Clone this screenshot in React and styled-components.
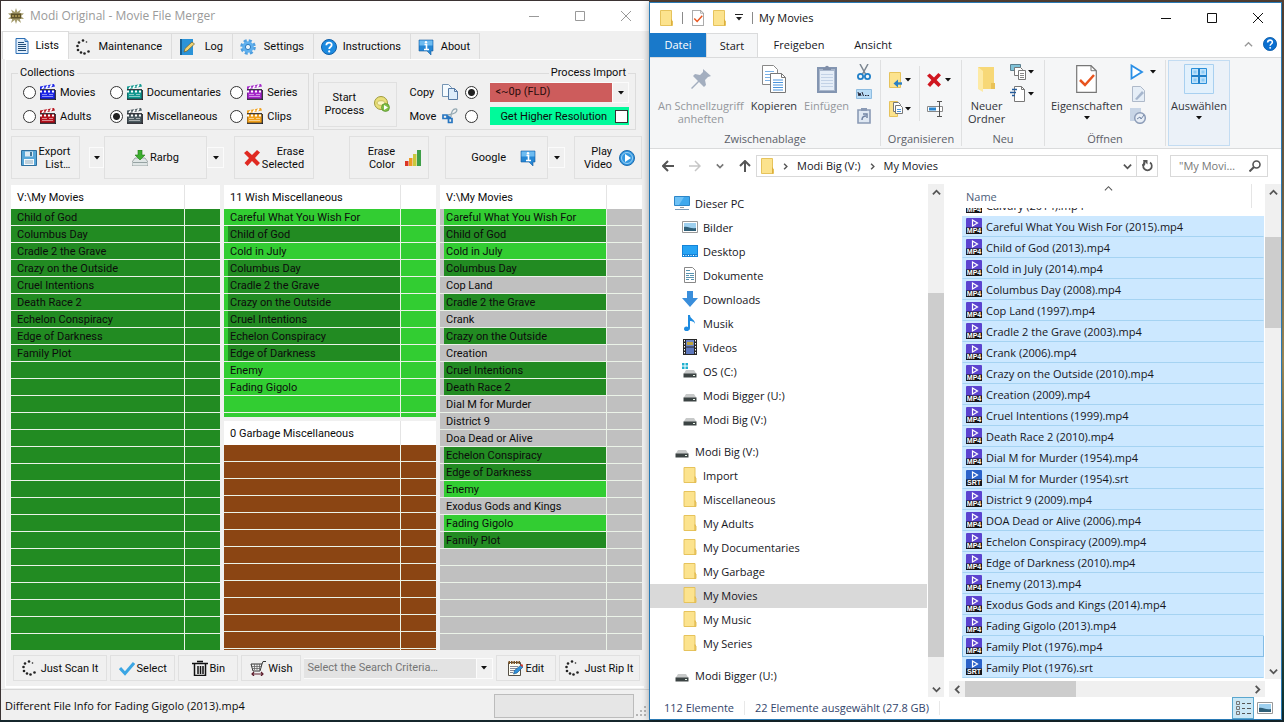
import React from "react";
import styled, { createGlobalStyle, css } from "styled-components";

const classic = 'Roboto, "Liberation Sans", Arial, sans-serif';
const modern = '"Open Sans", "Noto Sans", sans-serif';
const tracks = (...n) => n.map((v) => `minmax(0, ${v}fr)`).join(" ");

const Global = createGlobalStyle`
  * { box-sizing: border-box; }
  body { margin: 0; background: #4f3f35; }
  button, input, select { font: inherit; color: inherit; margin: 0; }
  button { border: 0; padding: 0; background: none; }
  a { color: inherit; text-decoration: none; }
  svg { display: block; flex: none; }
`;

const Desktop = styled.div`
  min-height: 100vh;
  padding: 0 2px 1px 0;
  display: grid;
  grid-template-columns: ${tracks(649, 633)};
  background: linear-gradient(#5a4537, #7b6a4c 25%, #b09a62 50%, #6b5a2e 75%, #0d3b3b 98%, #16252b);
`;

/* ---------- Movie File Merger window ---------- */
const Merger = styled.section`
  display: flex;
  flex-direction: column;
  margin-bottom: 1px;
  border-top: 1px solid #3b3333;
  border-left: 1px solid #3b3333;
  background: #f0f0f0;
  color: #0c0c0c;
  font: 11px/13px ${classic};
`;
const TitleBar = styled.header`
  display: flex;
  align-items: center;
  height: 30px;
  padding-left: ${(p) => p.$pad}px;
  background: #fff;
  color: ${(p) => p.$ink};
  font: ${(p) => p.$size}px/16px ${modern};
`;
const QuickAccess = styled.div`
  display: flex;
  align-items: center;
  gap: 9px;
`;
const TitleText = styled.h1`
  flex: 1;
  margin: 0 0 0 6px;
  font: inherit;
`;
const Control = styled.button`
  display: flex;
  align-items: center;
  justify-content: center;
  width: 46px;
  height: 28px;
`;
const TabStrip = styled.nav`
  display: flex;
  align-items: flex-end;
  height: 28px;
  padding-left: 1px;
`;
const Tab = styled.button`
  display: flex;
  align-items: center;
  justify-content: space-between;
  width: ${(p) => p.$w}px;
  height: ${(p) => (p.$on ? 28 : 26)}px;
  padding: 0 9px 0 ${(p) => (p.$on ? 11 : 7)}px;
  border: 1px solid #dcdcdc;
  border-bottom: 0;
  border-left-width: ${(p) => (p.$on ? 1 : 0)}px;
  background: ${(p) => (p.$on ? "#fff" : "#f0f0f0")};
`;
const Panel = styled.main`
  flex: 1;
  display: flex;
  flex-direction: column;
  margin: 0 5px 0 4px;
  padding: 6px 2px 5px 5px;
  border-top: 1px solid #fff;
  border-left: 1px solid #fff;
  border-bottom: 2px solid #fff;
`;
const GroupRow = styled.div`
  display: grid;
  grid-template-columns: ${tracks(298, 323)};
  gap: 4px;
  padding-right: 6px;
`;
const Group = styled.fieldset`
  min-width: 0;
  height: 64px;
  margin: 0;
  padding: 0;
  border: 1px solid #dcdcdc;
`;
const Legend = styled.legend`
  height: 14px;
  margin-left: ${(p) => (p.$end ? "auto" : "6px")};
  margin-right: ${(p) => (p.$end ? "7px" : "auto")};
  padding: 0 2px;
  line-height: 14px;
`;
const RadioGrid = styled.div`
  display: grid;
  grid-template-columns: ${tracks(87, 121, 78)};
  grid-auto-rows: 24px;
  padding-left: 11px;
`;
const Choice = styled.label`
  display: flex;
  align-items: center;
  gap: 4px;
  white-space: nowrap;
`;
const Radio = styled.input.attrs({ type: "radio" })`
  appearance: none;
  flex: none;
  width: 13px;
  height: 13px;
  border: 1px solid #333;
  border-radius: 50%;
  background: #fff;
  &:checked { background: radial-gradient(circle, #222 0 3px, #fff 4px); }
`;
const ProcessGrid = styled.div`
  display: grid;
  grid-template-columns: ${tracks(79, 70, 139)};
  grid-template-rows: 24px 24px;
  column-gap: 12px;
  align-items: center;
  padding: 0 6px 0 4px;
`;
const FlatButton = styled.button`
  display: flex;
  align-items: center;
  justify-content: ${(p) => p.$justify || "center"};
  gap: ${(p) => p.$gap || 2}px;
  min-width: 0;
  height: ${(p) => p.$h || 43}px;
  padding: 0 ${(p) => p.$pad || 0}px;
  grid-row: ${(p) => p.$span || "auto"};
  grid-column: ${(p) => p.$col || "auto"};
  border: 1px solid #e0e0e0;
  background: #f0f0f0;
  text-align: ${(p) => p.$align || "center"};
  white-space: pre;
`;
const CaretButton = styled.button`
  display: flex;
  align-items: center;
  justify-content: center;
  align-self: center;
  grid-column: ${(p) => p.$col || "auto"};
  width: 100%;
  height: 21px;
  border: 1px solid #fbfbfb;
  background: #f0f0f0;
`;
const Transfer = styled.label`
  display: grid;
  grid-template-columns: 26px 16px 13px;
  justify-content: end;
  align-items: center;
  gap: 7px;
`;
const Combo = styled.div`
  display: grid;
  grid-template-columns: minmax(0, 1fr) 17px;
  align-items: center;
  height: ${(p) => p.$h}px;
  background: #fafafa;
`;
const Select = styled.select`
  appearance: none;
  width: 100%;
  height: 19px;
  padding: 0 0 2px ${(p) => p.$pad}px;
  border: 0;
  border-radius: 0;
  background: ${(p) => p.$bg};
  color: ${(p) => p.$ink};
`;
const Resolution = styled.label`
  display: flex;
  align-items: center;
  justify-content: flex-end;
  gap: 8px;
  height: 18px;
  padding-right: 1px;
  background: #00fa9a;
`;
const Tick = styled.input.attrs({ type: "checkbox" })`
  appearance: none;
  width: 13px;
  height: 13px;
  border: 1px solid #333;
  background: #fff;
`;
const Toolbar = styled.div`
  display: grid;
  grid-template-columns: ${tracks(69, 9, 15, 103, 17, 10, 80, 35, 80, 16, 103, 17, 9, 68)};
  margin: 6px 0;
`;
const Lists = styled.div`
  display: grid;
  grid-template-columns: ${tracks(209, 212, 202)};
  gap: 4px;
`;
const Stack = styled.div`
  display: flex;
  flex-direction: column;
  gap: 4px;
`;
const Clip = styled.div`
  height: ${(p) => p.$h}px;
  overflow: hidden;
`;
const MovieTable = styled.table`
  width: 100%;
  table-layout: fixed;
  border-collapse: separate;
  border-spacing: 0;
  background: ${(p) => p.$bg};
  th {
    height: 24px;
    padding: 0 0 0 6px;
    background: #fff;
    font-weight: normal;
    text-align: left;
  }
  th:last-child { width: 35px; }
  th:first-child { border-right: 1px solid #e4e4e4; }
  td {
    height: 17px;
    padding: 0 0 0 4px;
    border-bottom: 1px solid #ebf3e8;
  }
  td:first-child { border-right: 1px solid #ebf3e8; }
`;
const MovieName = styled.div`
  height: 16px;
  padding-left: 2px;
  background: ${(p) => p.$bg};
  line-height: 18px;
  white-space: nowrap;
`;
const ActionBar = styled.div`
  display: grid;
  grid-template-columns: ${tracks(94, 65, 60, 60, 188, 60, 81)};
  gap: 3px;
  align-items: center;
  margin-top: 5px;
  padding: 0 2px;
`;
const MergerStatus = styled.footer`
  display: flex;
  align-items: center;
  height: 31px;
  margin-top: 1px;
  padding: 1px 2px 0 4px;
  border-top: 1px solid #d7d7d7;
  font: 11px/16px ${modern};
`;
const StatusText = styled.span`flex: 1;`;
const Progress = styled.div`
  width: 140px;
  height: 24px;
  margin-right: 2px;
  border: 1px solid #bcbcbc;
  background: #e6e6e6;
`;
const Grip = styled.span`align-self: flex-end; padding-bottom: 3px;`;

/* ---------- Explorer window ---------- */
const Explorer = styled.section`
  position: relative;
  display: flex;
  flex-direction: column;
  margin: 2px 0 1px;
  border: 1px solid #2a7ab5;
  background: #fff;
  color: #16161c;
  box-shadow: 0 0 7px rgba(0, 0, 0, 0.35);
  font: 11px/13px ${modern};
`;
const Rule = styled.span`
  width: 1px;
  height: 12px;
  background: #8a8a8a;
`;
const RibbonTabs = styled.nav`
  display: flex;
  height: 24px;
`;
const RibbonTab = styled.button`
  width: ${(p) => p.$w}px;
  padding-bottom: 2px;
  border: 1px solid transparent;
  border-bottom: 0;
  ${(p) => p.$kind === "file" && css`background: #1979ca; color: #fff;`}
  ${(p) => p.$kind === "on" && css`background: #f5f6f7; border-color: #dadbdc; height: 25px;`}
`;
const TabEnd = styled.div`
  display: flex;
  flex: 1;
  align-items: center;
  justify-content: flex-end;
  gap: 10px;
  padding: 0 4px 2px 0;
`;
const Ribbon = styled.div`
  display: flex;
  height: 92px;
  padding: 2px 0;
  border-top: 1px solid #dadbdc;
  border-bottom: 1px solid #dadbdc;
  background: #f5f6f7;
`;
const RibbonGroup = styled.div`
  display: flex;
  flex-direction: column;
  width: ${(p) => p.$w}px;
  border-right: 1px solid #dfe0e1;
`;
const RibbonBody = styled.div`
  display: flex;
  flex: 1;
  gap: ${(p) => p.$gap || 5}px;
  padding: 4px 0 0 ${(p) => p.$pad || 8}px;
`;
const RibbonLabel = styled.div`
  height: 16px;
  color: #5c6068;
  line-height: 17px;
  text-align: center;
`;
const Big = styled.button`
  display: flex;
  flex-direction: column;
  align-items: center;
  align-self: flex-start;
  gap: 5px;
  color: ${(p) => (p.$dim ? "#94979c" : "#33353a")};
  white-space: pre;
`;
const IconWell = styled.span`
  display: flex;
  align-items: center;
  justify-content: center;
  height: 30px;
`;
const Label = styled.span`
  display: flex;
  flex-direction: column;
  align-items: center;
  gap: 4px;
`;
const Column = styled.div`
  display: flex;
  flex-direction: column;
  gap: ${(p) => p.$gap || 6}px;
  padding-top: ${(p) => p.$top || 0}px;
`;
const Small = styled.button`
  display: flex;
  align-items: center;
  gap: ${(p) => p.$gap || 2}px;
  height: 16px;
`;
const Divider = styled.span`
  width: 1px;
  height: 55px;
  margin: 2px 2px 0 3px;
  background: #dfe0e1;
`;
const Chosen = styled.div`
  display: flex;
  justify-content: center;
  width: 62px;
  margin-left: 2px;
  padding-top: 3px;
  border: 1px solid #c3dcf2;
  background: #ebf1f8;
`;
const AddressRow = styled.div`
  display: flex;
  height: 35px;
  padding: 6px 13px 7px 12px;
`;
const Nav = styled.div`
  display: flex;
  align-items: center;
  width: 94px;
  gap: ${(p) => p.$gap}px;
`;
const Address = styled.div`
  display: flex;
  flex: 1;
  align-items: center;
  gap: 8px;
  padding-left: 4px;
  border: 1px solid #d9d9d9;
`;
const Crumb = styled.a`
  padding-bottom: 2px;
`;
const Push = styled.span`flex: 1;`;
const Refresh = styled.button`
  display: flex;
  align-items: center;
  justify-content: center;
  align-self: stretch;
  width: 21px;
  margin-left: -4px;
  border-left: 1px solid #d9d9d9;
`;
const Search = styled.label`
  display: flex;
  align-items: center;
  width: 98px;
  margin-left: 12px;
  padding: 0 6px 0 8px;
  border: 1px solid #d9d9d9;
`;
const SearchInput = styled.input`
  flex: 1;
  min-width: 0;
  padding: 0 0 1px;
  border: 0;
  outline: 0;
  background: none;
  &::placeholder { color: #777; opacity: 1; }
`;
const Body = styled.div`
  display: flex;
  flex: 1;
`;
const Tree = styled.ul`
  flex: 1;
  min-width: 0;
  margin: 0 1px 0 0;
  padding: 8px 0 0;
  list-style: none;
`;
const TreeLink = styled.a`
  display: flex;
  align-items: center;
  gap: 5px;
  height: 24px;
  margin-top: ${(p) => (p.$section ? 8 : 0)}px;
  padding: 0 0 2px ${(p) => (p.$deep ? 32 : 24)}px;
  background: ${(p) => (p.$on ? "#d9d9d9" : "none")};
`;
const VBar = styled.div`
  display: flex;
  flex-direction: column;
  width: 16px;
  background: #f0f0f0;
`;
const HBar = styled.div`
  display: flex;
  width: 100%;
  height: 16px;
  background: #f0f0f0;
`;
const Arrow = styled.button`
  display: flex;
  align-items: center;
  justify-content: center;
  width: 16px;
  height: 16px;
`;
const Space = styled.div`flex: ${(p) => p.$n} 0 0;`;
const Thumb = styled(Space)`background: #cdcdcd;`;
const FilesPane = styled.div`
  display: grid;
  grid-template-columns: minmax(0, 1fr) 16px;
  grid-template-rows: 1fr 16px;
  width: 332px;
  margin-left: 5px;
  row-gap: 2px;
`;
const FileTable = styled.table`
  align-self: start;
  width: 100%;
  border-spacing: 0;
  th, td { padding: 0 0 0 13px; text-align: left; font-weight: normal; }
  th { height: 24px; color: #4c607a; }
`;
const NameHead = styled.div`
  display: grid;
  grid-template-columns: 1fr 10px 1fr;
  height: 24px;
  margin-right: 13px;
  padding-left: 4px;
  border-right: 1px solid #e5e5e5;
  line-height: 26px;
`;
const FileClip = styled.div`
  display: flex;
  align-items: flex-end;
  height: 8px;
  overflow: hidden;
`;
const FileRow = styled.div`
  display: flex;
  align-items: center;
  gap: 4px;
  flex: none;
  height: 21px;
  margin-right: 1px;
  padding-left: 3px;
  border: 1px solid transparent;
  border-top: 0;
  white-space: nowrap;
  ${(p) => p.$picked && css`background: #cce8ff; border-color: #cce8ff; border-bottom-color: #a5d3f2;`}
  ${(p) => p.$focus && css`border-color: #84bde6;`}
`;
const ExplorerStatus = styled.footer`
  display: flex;
  align-items: center;
  height: 22px;
  padding: 0 5px 0 14px;
  color: #33456b;
`;
const StatusPart = styled.span`
  padding: 0 10px 1px;
  border-right: 1px solid #e8e8e8;
  &:first-child { padding-left: 0; }
`;
const ViewButton = styled.button`
  display: flex;
  align-items: center;
  justify-content: center;
  width: 22px;
  height: 22px;
  ${(p) => p.$on && css`background: #cbe8f6; border: 1px solid #5aa7cf;`}
`;

/* ---------- drawings ---------- */
const Svg = ({ w = 16, h = 16, box, children }) => (
  <svg width={w} height={h} viewBox={box || `0 0 ${w} ${h}`} fill="none" aria-hidden="true">{children}</svg>
);
const Caret = ({ color = "#111" }) => <Svg w={6} h={4}><path d="M0 0h6L3 3.5z" fill={color} /></Svg>;
const MinIcon = ({ c }) => <Svg w={10} h={10}><path d="M0 5.5h10" stroke={c} /></Svg>;
const MaxIcon = ({ c }) => <Svg w={10} h={10}><path d="M.5.5h9v9h-9z" stroke={c} /></Svg>;
const CloseIcon = ({ c }) => <Svg w={10} h={10}><path d="M0 0l10 10M10 0L0 10" stroke={c} /></Svg>;
const Chevron = ({ dir = "up", c = "#555", w = 9, s = 2 }) => (
  <Svg w={w} h={w} box="0 0 10 10">
    <path d={{ up: "M1 7l4-4 4 4", down: "M1 3l4 4 4-4", left: "M7 1L3 5l4 4", right: "M3 1l4 4-4 4" }[dir]} stroke={c} strokeWidth={s} />
  </Svg>
);
const BurstIcon = () => (
  <Svg><path d="M8 0l1.3 4L13 1.5 11.5 5 16 5.5 13 8l3 3-4.3-.2L13 15l-3.7-3L8 16l-1.3-4L3 15l1.3-4.2L0 11l3-3-3-2.5L4.5 5 3 1.5 6.7 4z" fill="#a49b6c" /><path d="M3 5.5h10v5H3z" fill="#5c5129" /><path d="M4 8h8" stroke="#ddc66c" strokeDasharray="2 1" /></Svg>
);
const PageIcon = () => (
  <Svg><path d="M2 .5h9l3 3v12H2z" fill="#e3effc" stroke="#2d6fb4" /><path d="M11 .5v3h3" stroke="#2d6fb4" /><path d="M4 4.5h6M4 6.5h8M4 8.5h8M4 10.5h8M4 12.5h8" stroke="#23507c" /></Svg>
);
const DotsIcon = () => (
  <Svg w={14} h={16}>{[[7, 1.5], [3, 3.5], [1.5, 7], [2, 11], [5, 13.5], [8.5, 14.5], [12.5, 12.5], [10.5, 3]].map(([x, y], i) => <circle key={i} cx={x} cy={y} r={i === 7 ? 0.8 : 1.3} fill="#222" />)}</Svg>
);
const LogIcon = () => (
  <Svg><path d="M1 0h13v16H1z" fill="#2b93d8" /><path d="M1 0h2v16H1z" fill="#176095" /><path d="M5 13l1-3.5L13 3l2.5 2L8 12z" fill="#f1d271" stroke="#6f602c" strokeWidth=".7" /></Svg>
);
const GearIcon = () => (
  <Svg><circle cx="8" cy="8" r="6.3" stroke="#4f9ede" strokeWidth="3" strokeDasharray="2.9 2.05" /><circle cx="8" cy="8" r="5.8" fill="#5fb0ee" /><circle cx="8" cy="8" r="2.6" fill="#e9f5fd" stroke="#2d7abd" /></Svg>
);
const HelpIcon = ({ size = 16, c = "#1d8be0" }) => (
  <Svg w={size} h={size} box="0 0 16 16"><circle cx="8" cy="8" r="7.5" fill={c} stroke="#0f5ea8" /><path d="M5.3 6.2c.2-3.6 5.5-3.3 5.4-.3C10.6 8 8.2 8 8.2 10" stroke="#fff" strokeWidth="1.8" /><circle cx="8.2" cy="12.4" r="1.1" fill="#fff" /></Svg>
);
const InfoIcon = () => (
  <Svg><path d="M1 1h14v11h-2v4l-4-4H1z" fill="#2687d4" stroke="#165c9d" strokeWidth=".6" /><path d="M1.5 1.5h13v5h-13z" fill="#6dbbf0" /><path d="M6.5 5.5h2v5M6 10.5h5" stroke="#fff" strokeWidth="1.6" /><circle cx="8" cy="3.2" r="1.2" fill="#fff" /></Svg>
);
const Clapper = ({ c }) => (
  <Svg>
    <path d="M0 6h15v9H0z" fill={c} stroke="#101018" strokeOpacity=".55" />
    <path d="M0 5.500V2.500L14 0l1 2.500z" fill={c} />
    <path d="M2 5l2-2.500M6 4.500l2-3M10 3.500l2-3" stroke="#fff" strokeWidth="1.600" />
    <path d="M0 7.500h15" stroke="#fff" strokeWidth="2" strokeDasharray="2 2" />
    <path d="M2 10.500h5M9 10.500h4M2 12.500h11" stroke="#fff" strokeOpacity=".5" />
    <path d="M0 5.500h15M0 15.500h16M15.500 6v10" stroke="#101018" strokeOpacity=".75" />
  </Svg>
);
const DiskArrow = () => (
  <Svg><circle cx="7" cy="7" r="6.500" fill="#e9df7a" stroke="#9e9a3c" /><path d="M3 7c0-3 8-3 8 0s-8 3-8 0" fill="#fbf7c4" stroke="#b5a94a" strokeWidth=".7" /><circle cx="11.500" cy="11.500" r="4" fill="#7fbf45" stroke="#4b8424" strokeWidth=".6" /><path d="M10 9l4 2.500-4 2.500z" fill="#fff" /></Svg>
);
const CopyIcon = () => (
  <Svg><path d="M.5.5h6l3 3v9h-9z" fill="#f4fafe" stroke="#7595b4" /><path d="M6.500 4.500h6l3 3v8h-9z" fill="#dcecfa" stroke="#5579a4" /><path d="M12.500 4.500v3h3" stroke="#5579a4" /></Svg>
);
const CutIcon = () => (
  <Svg><path d="M9 9C9 4 11 0 14.500 1c1.500 3-2 5-8.500 6" stroke="#93a8b2" strokeWidth="1.3" /><path d="M1 7h4v3.500H1zM6.500 10.500h3.500v4H6.500zM5 8l4 2" stroke="#2775c0" strokeWidth="1.700" /></Svg>
);
const SaveIcon = () => (
  <Svg><path d="M.5.5h15v15H.5z" fill="#56a6d8" stroke="#2e6f9e" /><path d="M4 1.500h8v5H4z" fill="#dceaf3" /><path d="M3 9h10v6H3z" fill="#f4f9fc" /><path d="M4 11h8M4 13h8" stroke="#8daabc" /><path d="M9 2h2v4H9z" fill="#3f7698" /></Svg>
);
const ImportIcon = () => (
  <Svg><path d="M3 8h10l3 4v4H0v-4z" fill="#dfe5e5" stroke="#7f8a8a" strokeWidth=".7" /><path d="M1 12.500h14" stroke="#96a3a3" /><path d="M6 0h4v5h3l-5 5-5-5h3z" fill="#3cae2f" stroke="#247b1a" strokeWidth=".6" /></Svg>
);
const RedX = ({ s = 16, c = "#e02a22" }) => (
  <Svg w={s} h={s} box="0 0 16 16"><path d="M0 3l3-2.500L8 5l5-5 3 2.500L11 8l5 5-3 3-5-5-4.500 5L.5 13 5 8z" fill={c} /></Svg>
);
const BarsIcon = () => (
  <Svg><path d="M0 11h3.500v5H0z" fill="#dc3524" /><path d="M4 8h3.500v8H4z" fill="#ee9a24" /><path d="M8 4h3.500v12H8z" fill="#c9c93d" /><path d="M12 0h4v16h-4z" fill="#3f9f49" /></Svg>
);
const PlayDisc = () => (
  <Svg><circle cx="8" cy="8" r="7.500" fill="#3297e0" stroke="#1f6cae" /><circle cx="8" cy="8" r="5.500" stroke="#9dd1f5" /><path d="M6 4l6 4-6 4z" fill="#fff" /></Svg>
);
const CheckIcon = () => <Svg><path d="M1 8l5 5.500L15 3" stroke="#3ba6e4" strokeWidth="3" /></Svg>;
const BinIcon = () => <Svg><path d="M0 3.500h16M5 1.500h6M2.500 4v11.500h11V4M6 6v8M8.500 6v8M11 6v8" stroke="#111" strokeWidth="1.500" /></Svg>;
const CartIcon = () => (
  <Svg><path d="M1 4h11l-2 7H3zM12 4l1-2.500h3" stroke="#333" /><path d="M2 6.500h9M3 8.500h8M4.500 4v6M7 4v6M9.500 4v6" stroke="#666" strokeWidth=".8" /><path d="M2 14h11M4 12l-2 2 2 2M11 12l2 2-2 2" stroke="#5c1c2c" strokeWidth="1.200" /></Svg>
);
const NoteIcon = () => (
  <Svg><path d="M1.500 2.500h12v13h-12z" fill="#fdfdf2" stroke="#554f45" /><path d="M1.500 2.500h12" stroke="#7c5324" strokeWidth="3" strokeDasharray="1.500 1" /><path d="M3 6.500h8M3 8.500h7M3 10.500h5M3 12.500h3" stroke="#889" /><path d="M6.500 14l1-3.500L14 5l2 2-6 6z" fill="#2f8fd8" stroke="#154d84" strokeWidth=".6" /><path d="M13 5l2-1 1.500 2-1.500 1z" fill="#d33b2f" /></Svg>
);
const GripIcon = () => (
  <Svg w={11} h={11}><path d="M8 0h2v2H8zM4 4h2v2H4zM8 4h2v2H8zM0 8h2v2H0zM4 8h2v2H4zM8 8h2v2H8z" fill="#b5b5b5" /></Svg>
);
const Folder = ({ w = 13, h = 16 }) => (
  <Svg w={w} h={h} box="0 0 13 16"><path d="M.5.5h11v10l1 .5v4.500H.5z" fill="#fce38e" stroke="#e6c35c" /><path d="M11.500 9.500v6" stroke="#dcae3d" /></Svg>
);
const BigFolder = () => <Svg w={19} h={28}><path d="M1 2h16v22H1z" fill="#f7d877" /><path d="M1 2l5 4v21l-5-3z" fill="#fdeaa5" /><path d="M14 18h4v6h-4z" fill="#e9c258" /></Svg>;
const CheckPage = ({ w = 12, h = 16 }) => (
  <Svg w={w} h={h} box="0 0 21 28"><path d="M.700.700H15l5.300 5v21.600H.700z" fill="#fff" stroke="#777" strokeWidth="1.2" /><path d="M15 .7v5h5" stroke="#777" /><path d="M4 15l5 5 9-10" stroke="#e8541e" strokeWidth="2.500" /></Svg>
);
const QuickCaret = () => <Svg w={8} h={8}><path d="M0 .5h8" stroke="#222" /><path d="M1 3h6L4 6.500z" fill="#222" /></Svg>;
const PinIcon = () => <Svg w={20} h={20}><path d="M12 0l8 7-3 1-3 3 1 5-2 2-5-5-7 7-1-1 7-7-5-5 2-2 5 1 3-3z" fill="#a3aebf" /></Svg>;
const PagesIcon = () => (
  <Svg w={24} h={28}><path d="M.5.5h11l4 4v15H.5z" fill="#fff" stroke="#888" /><path d="M3 6.500h9M3 9.500h5M3 12.500h5M3 15.500h5" stroke="#7bb1e6" /><path d="M8.500 8.500h11l4 4v15h-15z" fill="#fff" stroke="#777" /><path d="M19.500 8.500v4h4" stroke="#777" /><path d="M11 15h10M11 17.500h10M11 20h10M11 22.500h10M11 25h10" stroke="#4b94dc" /></Svg>
);
const PasteIcon = () => (
  <Svg w={20} h={28}><path d="M1 3h18v24H1z" fill="#a9b7cc" stroke="#8395b1" strokeWidth="2" /><path d="M3 6h14v19H3z" fill="#e6eef8" /><path d="M6 5V3h2c0-3 4-3 4 0h2v2z" fill="#7f8ea8" /><path d="M4 9.500h12M4 12.500h12M4 15.500h12M4 18.500h12M4 21.500h12" stroke="#c3d2e6" /></Svg>
);
const ScissorIcon = () => <Svg><path d="M4 0l6 11M12 0L6 11" stroke="#7a8590" strokeWidth="1.500" /><circle cx="4.500" cy="12.500" r="2.600" stroke="#2180c8" strokeWidth="1.800" /><circle cx="11.500" cy="12.500" r="2.600" stroke="#2180c8" strokeWidth="1.800" /></Svg>;
const PathIcon = () => <Svg w={16} h={10}><path d="M.5.5h15v9H.5z" fill="#b9dcf6" stroke="#8ebce0" /><path d="M2 3l1 4 1-3 1 3M6 3l1.500 4M9 6.500h1.500M11.500 6.500H13" stroke="#223" /></Svg>;
const ShortcutIcon = () => <Svg><path d="M2 2h12v13H2z" fill="#dfe8f3" stroke="#8a9ab5" strokeWidth="1.600" /><path d="M5 0h6v3H5z" fill="#8a9ab5" /><path d="M6 12c0-3 1-4 4-4M7 6h4v4" stroke="#7184a4" strokeWidth="1.500" /></Svg>;
const MoveTo = () => <Svg w={14} h={16}><path d="M.5.5h11v15H.5z" fill="#fce38e" stroke="#e6c35c" /><path d="M13 11.500H8" stroke="#2a7fc4" strokeWidth="2.400" /><path d="M9 7.500v8l-4.500-4z" fill="#2a7fc4" /></Svg>;
const CopyTo = () => <Svg w={14} h={16}><path d="M.5.500h8v15h-8z" fill="#fce38e" stroke="#e6c35c" /><path d="M4.500 1.500h5l2 2v7h-7z" fill="#fff" stroke="#777" /><path d="M6.500 4.500h5l2 2v6h-7z" fill="#fff" stroke="#777" /><path d="M8 8.500h4M8 10.500h4" stroke="#4b94dc" /></Svg>;
const RenameIcon = () => <Svg><path d="M.5 5.500h15v5H.5z" fill="#fff" stroke="#888" /><path d="M2 6.500h7v3H2z" fill="#2a86d0" /><path d="M10 .5h5M10 15.500h5M12.500 1v14" stroke="#555" /></Svg>;
const NewItem = () => <Svg><path d="M.5.5h10v6H.5z" fill="#7fc2d8" stroke="#5c7f8e" /><path d="M4.500 3.500h6l2 2v6h-8z" fill="#fff" stroke="#777" /><path d="M8.500 6.500h7v9h-7z" fill="#fff" stroke="#777" /><path d="M10 9.500h4M10 11.500h4M10 13.500h4" stroke="#888" /></Svg>;
const EasyAccess = () => <Svg><path d="M4.500.5h7l3 3v12h-10z" fill="#fff" stroke="#777" /><path d="M11.500.5v3h3" stroke="#777" /><path d="M2 3.500h5M0 6.500h6M2 9.500h3" stroke="#255c9c" strokeWidth="1.500" /></Svg>;
const PlayIcon = () => <Svg w={14} h={16}><path d="M1.500 1.500L12 8 1.500 14.500z" fill="#fff" stroke="#2a8fe6" strokeWidth="1.800" /></Svg>;
const EditPage = () => <Svg><path d="M2.500.5h8l4 4v11h-12z" fill="#e6eef7" stroke="#aeb9c9" /><path d="M5 13l7-8 2 2-7 7z" fill="#a6b6cd" /></Svg>;
const HistoryIcon = () => <Svg><path d="M0 0h11v13H0z" fill="#c8d5e6" /><circle cx="10" cy="10" r="5.300" fill="#e8eef6" stroke="#8d9db8" strokeWidth="1.500" /><path d="M7 11l3-2 1 2 3-4" stroke="#7184a4" /></Svg>;
const TilesIcon = () => <Svg w={30} h={30}><path d="M.5.5h29v29H.5z" fill="#e3f1fc" stroke="#a8d0f0" /><path d="M7.500 4.500h15v15h-15z" fill="#bfe2fb" stroke="#2a8fd8" /><path d="M15 4.500v15M7.500 12h15" stroke="#1f7fc8" strokeWidth="2" /><path d="M9.500 6.500h3v3h-3zM17.500 6.500h3v3h-3zM9.500 14.500h3v3h-3zM17.500 14.500h3v3h-3z" fill="#8ccbf6" /></Svg>;
const ArrowIcon = ({ c, up }) => (
  <Svg w={12} h={12}><path d={up ? "M6 12V1M1 6l5-5 5 5" : "M12 6H1M6 1L1 6l5 5"} stroke={c} strokeWidth="2" /></Svg>
);
const ForwardIcon = () => <Svg w={12} h={12}><path d="M0 6h11M6 1l5 5-5 5" stroke="#c6c6c6" strokeWidth="1.500" /></Svg>;
const RefreshIcon = () => <Svg w={11} h={12}><path d="M3 2.500a4.300 4.300 0 1 0 5 0" stroke="#555" strokeWidth="1.700" /><path d="M2 0v5h-2M2.500.500v4.500" stroke="#555" strokeWidth="1.300" /><path d="M1 0h4.500v4.500z" fill="#555" /></Svg>;
const Lens = () => <Svg w={12} h={12}><circle cx="7.500" cy="4.500" r="3.500" stroke="#555" strokeWidth="1.600" /><path d="M5 7L.5 11.500" stroke="#555" strokeWidth="2" /></Svg>;
const PcIcon = () => <Svg><path d="M.5 1.500h15v9H.5z" fill="#3fa9ee" stroke="#2c86c8" /><path d="M1 2h9L5 10H1z" fill="#6fc2f6" /><path d="M6 12.500h4" stroke="#999" /><path d="M1 14.500h14" stroke="#7c9cb8" /></Svg>;
const PictureIcon = () => <Svg><path d="M.5 2.500h15v11H.5z" fill="#fff" stroke="#999" /><path d="M2 4h12v8H2z" fill="#9ed0ef" /><path d="M2 8c4-1 6 2 12 1v3H2z" fill="#2f5f78" /></Svg>;
const DesktopIcon = () => <Svg><path d="M0 2h16v12H0z" fill="#1483d8" /><path d="M1 3h14v8H1z" fill="#27a4f4" /><path d="M1 12.500h14" stroke="#fff" strokeDasharray="1 1.500" /></Svg>;
const DocIcon = () => <Svg><path d="M2.500.5h8l3 3v12h-11z" fill="#fff" stroke="#888" /><path d="M4 3.500h4M4 6.500h8M4 8.500h3M8 8.500h4M4 10.500h8M4 12.500h3M9 12.500h3" stroke="#5793b0" /></Svg>;
const DownIcon = () => <Svg><path d="M5 0h6v7h5l-8 9-8-9h5z" fill="#3a8edb" /></Svg>;
const MusicIcon = () => <Svg><path d="M6 0h2c0 4 5 4 5 9-1-3-4-3-5-3v7c0 4-6 4-6 1s3-3 4-2z" fill="#1e8be0" /></Svg>;
const FilmIcon = () => <Svg><path d="M1 0h14v16H1z" fill="#262626" /><path d="M4 1h8v6.500H4z" fill="#6f86c8" /><path d="M4 8.500h8V15H4z" fill="#5d77bd" /><path d="M5 3h6v3H5z" fill="#bda43c" /><path d="M2.500 1v15M13.500 1v15" stroke="#fff" strokeDasharray="1.500 1.500" /></Svg>;
const DriveIcon = ({ win }) => (
  <Svg>{win && <path d="M0 0h2.500v2.500H0zM3.500 0H6v2.500H3.500zM0 3.500h2.500V6H0zM3.500 3.500H6V6H3.500z" fill="#1fb0cf" />}<path d="M4 7h8l2.500 4h-13z" fill="#c7c9c9" /><path d="M1.500 10.500h13v4h-13z" fill="#3c4444" /><path d="M11 12.500h2" stroke="#e8f5e8" /></Svg>
);
const MediaIcon = ({ kind }) => (
  <Svg w={16} h={17}>
    <rect width="16" height="16" rx="1" fill={kind === "SRT" ? "#2c62c9" : "#5b43cf"} />
    <path d="M6.500 2l5 3-5 3z" stroke="#fff" strokeWidth="1.2" />
    <path d="M0 9.500h16V16H0z" fill="#151518" />
    <text x="8" y="15.400" textAnchor="middle" fontFamily="Liberation Sans" fontWeight="bold" fontSize="7" fill="#fff">{kind}</text>
  </Svg>
);
const DetailsIcon = () => <Svg><path d="M1.500 1.500h3v3h-3zM1.500 6.500h3v3h-3zM1.500 11.500h3v3h-3z" stroke="#777" /><path d="M7 3.500h3M12 3.500h4M7 8.500h3M12 8.500h4M7 13.500h3M12 13.500h4" stroke="#555" /></Svg>;

/* ---------- data ---------- */
const DARK = "#228b22";
const LIME = "#32cd32";
const SILVER = "#c0c0c0";
const BROWN = "#8b4513";

const seen = ["Child of God", "Columbus Day", "Cradle 2 the Grave", "Crazy on the Outside", "Cruel Intentions", "Death Race 2", "Echelon Conspiracy", "Edge of Darkness", "Family Plot"];
const wish = [["Careful What You Wish For", LIME], ["Child of God", DARK], ["Cold in July", LIME], ["Columbus Day", DARK], ["Cradle 2 the Grave", DARK], ["Crazy on the Outside", DARK], ["Cruel Intentions", DARK], ["Echelon Conspiracy", DARK], ["Edge of Darkness", DARK], ["Enemy", LIME], ["Fading Gigolo", LIME]];
const found = [["Careful What You Wish For", LIME], ["Child of God", DARK], ["Cold in July", LIME], ["Columbus Day", DARK], ["Cop Land"], ["Cradle 2 the Grave", DARK], ["Crank"], ["Crazy on the Outside", DARK], ["Creation"], ["Cruel Intentions", DARK], ["Death Race 2", DARK], ["Dial M for Murder"], ["District 9"], ["Doa Dead or Alive"], ["Echelon Conspiracy", DARK], ["Edge of Darkness", DARK], ["Enemy", LIME], ["Exodus Gods and Kings"], ["Fading Gigolo", LIME], ["Family Plot", DARK]];
const files = ["Careful What You Wish For (2015).mp4", "Child of God (2013).mp4", "Cold in July (2014).mp4", "Columbus Day (2008).mp4", "Cop Land (1997).mp4", "Cradle 2 the Grave (2003).mp4", "Crank (2006).mp4", "Crazy on the Outside (2010).mp4", "Creation (2009).mp4", "Cruel Intentions (1999).mp4", "Death Race 2 (2010).mp4", "Dial M for Murder (1954).mp4", "Dial M for Murder (1954).srt", "District 9 (2009).mp4", "DOA Dead or Alive (2006).mp4", "Echelon Conspiracy (2009).mp4", "Edge of Darkness (2010).mp4", "Enemy (2013).mp4", "Exodus Gods and Kings (2014).mp4", "Fading Gigolo (2013).mp4", "Family Plot (1976).mp4", "Family Plot (1976).srt"];
const tabs = [["Lists", PageIcon, 67], ["Maintenance", DotsIcon, 103], ["Log", LogIcon, 61], ["Settings", GearIcon, 81], ["Instructions", HelpIcon, 97], ["About", InfoIcon, 69]];
const collections = [["Movies", "#1c26e8"], ["Documentaries", "#12978f"], ["Series", "#a428c8"], ["Adults", "#b5121c"], ["Miscellaneous", "#4c5a60"], ["Clips", "#f0a01c"]];
const tree = [
  ["Dieser PC", PcIcon, "top"], ["Bilder", PictureIcon], ["Desktop", DesktopIcon], ["Dokumente", DocIcon], ["Downloads", DownIcon], ["Musik", MusicIcon], ["Videos", FilmIcon],
  ["OS (C:)", () => <DriveIcon win />], ["Modi Bigger (U:)", DriveIcon], ["Modi Big (V:)", DriveIcon],
  ["Modi Big (V:)", DriveIcon, "section"],
  ...["Import", "Miscellaneous", "My Adults", "My Documentaries", "My Garbage", "My Movies", "My Music", "My Series"].map((n) => [n, () => <Folder w={16} />]),
  ["Modi Bigger (U:)", DriveIcon, "section"],
];

function Movies({ title, bg, items, rows, height }) {
  return (
    <Clip $h={height}>
      <MovieTable $bg={bg}>
        <thead><tr><th scope="col">{title}</th><th aria-label="Mark" /></tr></thead>
        <tbody>
          {Array.from({ length: rows }, (_, i) => (
            <tr key={i}>
              <td><MovieName $bg={(items[i] && items[i][1]) || bg}>{items[i] && items[i][0]}</MovieName></td>
              <td />
            </tr>
          ))}
        </tbody>
      </MovieTable>
    </Clip>
  );
}

function Controls({ c }) {
  return (
    <>
      <Control aria-label="Minimize"><MinIcon c={c} /></Control>
      <Control aria-label="Maximize"><MaxIcon c={c} /></Control>
      <Control aria-label="Close"><CloseIcon c={c} /></Control>
    </>
  );
}

function MergerWindow() {
  return (
    <Merger>
      <TitleBar $pad={7} $ink="#9a9a9a" $size={12}><BurstIcon /><TitleText>Modi Original - Movie File Merger</TitleText><Controls c="#999" /></TitleBar>
      <TabStrip>
        {tabs.map(([name, Icon, w], i) => <Tab key={name} $w={w} $on={i === 0}><Icon />{name}</Tab>)}
      </TabStrip>
      <Panel>
        <GroupRow>
          <Group>
            <Legend>Collections</Legend>
            <RadioGrid>
              {collections.map(([name, c]) => (
                <Choice key={name}><Radio name="collection" defaultChecked={name === "Miscellaneous"} /><Clapper c={c} />{name}</Choice>
              ))}
            </RadioGrid>
          </Group>
          <Group>
            <Legend $end>Process Import</Legend>
            <ProcessGrid>
              <FlatButton $h={45} $gap={10} $span="1 / 3">{"Start\nProcess"}<DiskArrow /></FlatButton>
              <Transfer>Copy<CopyIcon /><Radio name="transfer" defaultChecked /></Transfer>
              <Combo $h={20}>
                <Select aria-label="Resolution" $bg="#cd5c5c" $pad={5} $ink="#2b0d0d"><option>&lt;~0p (FLD)</option></Select>
                <CaretButton aria-label="Open"><Caret /></CaretButton>
              </Combo>
              <Transfer>Move<CutIcon /><Radio name="transfer" /></Transfer>
              <Resolution>Get Higher Resolution<Tick /></Resolution>
            </ProcessGrid>
          </Group>
        </GroupRow>
        <Toolbar>
          <FlatButton $align="right"><SaveIcon />{"Export\nList…"}</FlatButton>
          <CaretButton $col="3" aria-label="Export options"><Caret /></CaretButton>
          <FlatButton><ImportIcon />Rarbg</FlatButton>
          <CaretButton aria-label="Sources"><Caret /></CaretButton>
          <FlatButton $col="7" $align="right"><RedX />{"Erase\nSelected"}</FlatButton>
          <FlatButton $col="9" $gap={10} $align="right" $justify="flex-end" $pad={7}>{"Erase\nColor"}<BarsIcon /></FlatButton>
          <FlatButton $col="11" $gap={14} $justify="flex-end" $pad={11}>Google<InfoIcon /></FlatButton>
          <CaretButton aria-label="Search engines"><Caret /></CaretButton>
          <FlatButton $col="14" $gap={7} $align="right" $justify="flex-end" $pad={6}>{"Play\nVideo"}<PlayDisc /></FlatButton>
        </Toolbar>
        <Lists>
          <Movies title="V:\My Movies" bg={DARK} items={seen.map((n) => [n])} rows={26} height={465} />
          <Stack>
            <Movies title="11 Wish Miscellaneous" bg={LIME} items={wish} rows={13} height={232} />
            <Movies title="0 Garbage Miscellaneous" bg={BROWN} items={[]} rows={13} height={229} />
          </Stack>
          <Movies title="V:\My Movies" bg={SILVER} items={found} rows={26} height={465} />
        </Lists>
        <ActionBar>
          <FlatButton $h={26} $gap={5}><DotsIcon />Just Scan It</FlatButton>
          <FlatButton $h={26}><CheckIcon />Select</FlatButton>
          <FlatButton $h={26}><BinIcon />Bin</FlatButton>
          <FlatButton $h={26}><CartIcon />Wish</FlatButton>
          <Combo $h={21}>
            <Select aria-label="Search criteria" $bg="#e3e3e3" $pad={3} $ink="#757575"><option>Select the Search Criteria…</option></Select>
            <CaretButton aria-label="Open"><Caret /></CaretButton>
          </Combo>
          <FlatButton $h={26}><NoteIcon />Edit</FlatButton>
          <FlatButton $h={26} $gap={5}><DotsIcon />Just Rip It</FlatButton>
        </ActionBar>
      </Panel>
      <MergerStatus>
        <StatusText>Different File Info for Fading Gigolo (2013).mp4</StatusText>
        <Progress />
        <Grip><GripIcon /></Grip>
      </MergerStatus>
    </Merger>
  );
}

function ExplorerRibbon() {
  return (
    <Ribbon>
      <RibbonGroup $w={231}>
        <RibbonBody $gap={7}>
          <Big $dim><IconWell><PinIcon /></IconWell>{"An Schnellzugriff\nanheften"}</Big>
          <Big><IconWell><PagesIcon /></IconWell>Kopieren</Big>
          <Big $dim><IconWell><PasteIcon /></IconWell>Einfügen</Big>
          <Column>
            <Small aria-label="Ausschneiden"><ScissorIcon /></Small>
            <Small aria-label="Pfad kopieren"><PathIcon /></Small>
            <Small aria-label="Verknüpfung einfügen"><ShortcutIcon /></Small>
          </Column>
        </RibbonBody>
        <RibbonLabel>Zwischenablage</RibbonLabel>
      </RibbonGroup>
      <RibbonGroup $w={81}>
        <RibbonBody>
          <Column $gap={13} $top={8}>
            <Small aria-label="Verschieben nach"><MoveTo /><Caret /></Small>
            <Small aria-label="Kopieren nach"><CopyTo /><Caret /></Small>
          </Column>
          <Divider />
          <Column $gap={13} $top={8}>
            <Small $gap={4} aria-label="Löschen"><RedX s={14} c="#d01620" /><Caret /></Small>
            <Small aria-label="Umbenennen"><RenameIcon /></Small>
          </Column>
        </RibbonBody>
        <RibbonLabel>Organisieren</RibbonLabel>
      </RibbonGroup>
      <RibbonGroup $w={83}>
        <RibbonBody $pad={6}>
          <Big><IconWell><BigFolder /></IconWell>{"Neuer\nOrdner"}</Big>
          <Column>
            <Small aria-label="Neues Element"><NewItem /><Caret /></Small>
            <Small aria-label="Einfacher Zugriff"><EasyAccess /><Caret /></Small>
          </Column>
        </RibbonBody>
        <RibbonLabel>Neu</RibbonLabel>
      </RibbonGroup>
      <RibbonGroup $w={121}>
        <RibbonBody $pad={6} $gap={7}>
          <Big><IconWell><CheckPage w={21} h={28} /></IconWell><Label>Eigenschaften<Caret /></Label></Big>
          <Column>
            <Small $gap={6} aria-label="Öffnen"><PlayIcon /><Caret /></Small>
            <Small aria-label="Bearbeiten"><EditPage /></Small>
            <Small aria-label="Verlauf"><HistoryIcon /></Small>
          </Column>
        </RibbonBody>
        <RibbonLabel>Öffnen</RibbonLabel>
      </RibbonGroup>
      <Chosen><Big><IconWell><TilesIcon /></IconWell><Label>Auswählen<Caret /></Label></Big></Chosen>
    </Ribbon>
  );
}

const FileEntry = ({ name, picked, focus }) => (
  <FileRow $picked={picked} $focus={focus}><MediaIcon kind={name.endsWith("srt") ? "SRT" : "MP4"} />{name}</FileRow>
);

function ExplorerWindow() {
  return (
    <Explorer>
      <TitleBar $pad={10} $ink="#111" $size={11}>
        <QuickAccess><Folder /><Rule /><CheckPage /><Folder /><QuickCaret /><Rule /></QuickAccess>
        <TitleText>My Movies</TitleText><Controls c="#111" />
      </TitleBar>
      <RibbonTabs>
        <RibbonTab $w={56} $kind="file">Datei</RibbonTab>
        <RibbonTab $w={52} $kind="on">Start</RibbonTab>
        <RibbonTab $w={82}>Freigeben</RibbonTab>
        <RibbonTab $w={66}>Ansicht</RibbonTab>
        <TabEnd><Chevron c="#999" s={1.5} /><HelpIcon size={14} c="#0b6fd0" /></TabEnd>
      </RibbonTabs>
      <ExplorerRibbon />
      <AddressRow>
        <Nav $gap={15}><ArrowIcon c="#555" /><ForwardIcon /><Chevron dir="down" c="#777" w={8} /><ArrowIcon c="#555" up /></Nav>
        <Address>
          <Folder /><Chevron dir="right" w={7} /><Crumb href="#v">Modi Big (V:)</Crumb><Chevron dir="right" w={7} /><Crumb href="#movies">My Movies</Crumb>
          <Push /><Chevron dir="down" w={9} /><Refresh aria-label="Aktualisieren"><RefreshIcon /></Refresh>
        </Address>
        <Search><SearchInput aria-label="Suchen" placeholder={'"My Movi…'} /><Lens /></Search>
      </AddressRow>
      <Body>
        <Tree>
          {tree.map(([name, Icon, kind], i) => (
            <li key={i}><TreeLink href={`#item${i}`} $deep={!kind} $section={kind === "section"} $on={name === "My Movies"}><Icon />{name}</TreeLink></li>
          ))}
        </Tree>
        <VBar><Arrow aria-label="Nach oben"><Chevron /></Arrow><Space $n={93} /><Thumb $n={364} /><Space $n={24} /><Arrow aria-label="Nach unten"><Chevron dir="down" /></Arrow></VBar>
        <FilesPane>
          <FileTable>
            <thead><tr><th scope="col"><NameHead>Name<Chevron s={1.2} /></NameHead></th></tr></thead>
            <tbody>
              <tr><td><FileClip><FileEntry name="Calvary (2014).mp4" /></FileClip></td></tr>
              {files.map((name) => <tr key={name}><td><FileEntry name={name} picked focus={name === "Family Plot (1976).mp4"} /></td></tr>)}
            </tbody>
          </FileTable>
          <VBar><Arrow aria-label="Nach oben"><Chevron /></Arrow><Space $n={37} /><Thumb $n={91} /><Space $n={336} /><Arrow aria-label="Nach unten"><Chevron dir="down" /></Arrow></VBar>
          <HBar><Arrow aria-label="Nach links"><Chevron dir="left" /></Arrow><Thumb $n={111} /><Space $n={172} /><Arrow aria-label="Nach rechts"><Chevron dir="right" /></Arrow></HBar>
        </FilesPane>
      </Body>
      <ExplorerStatus>
        <StatusPart>112 Elemente</StatusPart><StatusPart>22 Elemente ausgewählt (27.8 GB)</StatusPart><Push />
        <ViewButton $on aria-label="Details"><DetailsIcon /></ViewButton><ViewButton aria-label="Miniaturansicht"><PictureIcon /></ViewButton>
      </ExplorerStatus>
    </Explorer>
  );
}

export default function App() {
  return (
    <Desktop>
      <Global />
      <MergerWindow />
      <ExplorerWindow />
    </Desktop>
  );
}
